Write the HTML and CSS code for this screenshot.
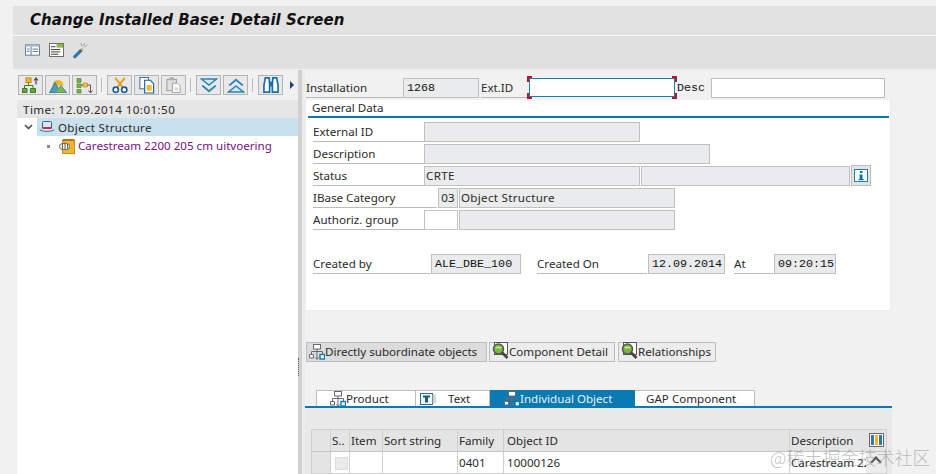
FILE: index.html
```html
<!DOCTYPE html>
<html lang="en">
<head>
<meta charset="utf-8">
<title>Change Installed Base: Detail Screen</title>
<link rel="stylesheet" href="styles.css">
</head>
<body>
<svg class="defs" width="0" height="0" aria-hidden="true">
  <defs>
    <symbol id="hier" viewBox="0 0 16 16">
      <rect x="4.500" y=".5" width="7" height="4.500" fill="#fff" stroke="#667"/>
      <path d="M8 5v2.500M2.500 10V7.500h11V10M8 7.500V11" fill="none" stroke="#667"/>
      <path d="M.5 10.500h4v3.500h-4z" fill="#fff" stroke="#667"/>
      <path d="M8 11v4M6.500 13.500 8 15.500l1.500-2" fill="none" stroke="#667"/>
      <rect x="11" y="10.500" width="4.500" height="4.500" fill="#fff" stroke="#0a7ab5" stroke-width="1.400"/>
    </symbol>
    <symbol id="zoomleaf" viewBox="0 0 18 18">
      <rect x="3.500" y=".5" width="13" height="12" fill="#fff" stroke="#556"/>
      <circle cx="7.500" cy="7" r="5" fill="#79b83a" stroke="#555" stroke-width="1.500"/>
      <path d="M4.500 5.500h6" stroke="#cfe6a8" stroke-width="1.500"/>
      <path d="M11 10.500l5.500 5.500" stroke="#444" stroke-width="2.600"/>
    </symbol>
  </defs>
</svg>

<header class="title-bar"><h1>Change Installed Base: Detail Screen</h1></header>

<div class="app-toolbar">
  <svg class="tb-ico" viewBox="0 0 16 12"><rect x=".5" y=".5" width="15" height="11" fill="#fff" stroke="#56799a"/><path d="M.5.5h15v2H.5z" fill="#a9bfd1"/><path d="M6.500 2.500v9M2 5h3M2 7.500h3M8 5h6M8 7.500h6" stroke="#56799a"/></svg>
  <svg class="tb-ico tb-doc" viewBox="0 0 16 15"><rect x=".5" y=".5" width="15" height="14" fill="#fff" stroke="#666"/><rect x="8" y="1" width="7" height="4" fill="#8dbb4c"/><path d="M2 4h5M2 7h10M2 9.500h10M2 12h8" stroke="#333"/></svg>
  <svg class="tb-ico wand" viewBox="0 0 16 17"><path d="M.5 14.500 8 7l2 2-7.500 7.500q-2 .5-2-2z" fill="#2a78ad" stroke="#1d5c88" stroke-width=".6"/><path d="M8 7l1.500-1.500 2 2L10 9z" fill="#e9b04a"/><path d="M8 .5l2 3.500M12.500 .5 11.500 4M15.500 2.500l-3 2.500" stroke="#8a8a8a" stroke-width=".8"/></svg>
</div>

<main class="workspace">
  <aside class="tree-panel">
    <div class="tree-toolbar">
      <button class="tool" aria-label="Hierarchy up">
        <svg viewBox="0 0 18 16"><rect x="4" y=".5" width="5" height="4.500" fill="#f5b818" stroke="#c68a10"/><path d="M6.500 5V8M2.500 11V8h8.500v3" fill="none" stroke="#3f7a28"/><path d="M.5 11h4.500v4H.5zM8.500 11H13.500v4H8.500z" fill="#62a83c" stroke="#3f7a28"/><path d="M14 7V1M12 3l2-2.500L16 3" fill="none" stroke="#445" stroke-width="1.200"/></svg>
      </button>
      <button class="tool" aria-label="Landscape">
        <svg viewBox="0 0 18 16"><path d="M3.500 8a5.500 5.500 0 0 1 11 0z" fill="#f4b41e"/><path d="M.5 15 6 5l3.500 6L12 8l5.500 7z" fill="#4b9bb5" stroke="#2b7390" stroke-width=".8"/><path d="M7 15l5-7 4.500 7z" fill="#80b54a"/></svg>
      </button>
      <button class="tool" aria-label="Structure">
        <svg viewBox="0 0 18 16"><path d="M1 1h4v4H1zM1 6.500h4v3.500H1zM1 12h4v3.500H1z" fill="#7bb043" stroke="#4d8a2f" stroke-width=".7"/><path d="M7 5.500h4.500v4H7z" fill="#f0c040" stroke="#b78e16" stroke-width=".7"/><path d="M5 7.500h2M11.500 7.500H14.500V15M12.500 13l2 2.500 2-2.500" fill="none" stroke="#556" stroke-width="1"/></svg>
      </button>
      <span class="sep"></span>
      <button class="tool" aria-label="Cut">
        <svg viewBox="0 0 18 18"><path d="M4 1l8 10M14 1 6 11" stroke="#e6a01e" stroke-width="2.200"/><circle cx="4.500" cy="13.500" r="2.800" fill="#fff" stroke="#1f5f96" stroke-width="1.700"/><circle cx="13.500" cy="13.500" r="2.800" fill="#fff" stroke="#1f5f96" stroke-width="1.700"/></svg>
      </button>
      <button class="tool" aria-label="Copy">
        <svg viewBox="0 0 18 18"><rect x="1.500" y=".5" width="9" height="12" fill="#fff" stroke="#33689c"/><path d="M6.500 3.500h6l3.500 3.500v10H6.500z" fill="#fff" stroke="#1f5f96" stroke-width="1.200"/><path d="M8.500 8.500h5.500v6H8.500z" fill="#f0bc36"/></svg>
      </button>
      <button class="tool" aria-label="Paste">
        <svg viewBox="0 0 18 18"><rect x="1.500" y="2.500" width="10" height="12" fill="#e0e0e0" stroke="#999"/><rect x="4" y=".5" width="5" height="3" fill="#aaa"/><path d="M7.500 6.500h5l3 3v7h-8z" fill="#fff" stroke="#8ba4ba"/><path d="M9.500 11h4v3.500h-4z" fill="#e9d8a6"/></svg>
      </button>
      <span class="sep"></span>
      <button class="tool" aria-label="Expand">
        <svg viewBox="0 0 18 16"><path d="M1.500 1.500h15L9 7.500z" fill="#d5e9f4" stroke="#2a82b8" stroke-width="1.500"/><path d="M3 7.500 9 12.500l6-5 1.500 1L9 15 1.500 8.500z" fill="#2a82b8"/></svg>
      </button>
      <button class="tool" aria-label="Collapse">
        <svg viewBox="0 0 18 16"><path d="M3 8.500 9 3.500l6 5 1.500-1L9 1 1.500 7.500z" fill="#2a82b8"/><path d="M1.500 14.500h15L9 8.500z" fill="#d5e9f4" stroke="#2a82b8" stroke-width="1.500"/></svg>
      </button>
      <span class="sep"></span>
      <button class="tool" aria-label="Find">
        <svg viewBox="0 0 18 18"><path d="M1.500 9 3 1h4l.5 6v9h-6zM16.500 9 15 1h-4l-.5 6v9h6z" fill="#fff" stroke="#1d6ea6" stroke-width="1.800"/><path d="M7.500 5h3v5h-3z" fill="#1d6ea6"/></svg>
      </button>
      <span class="more"></span>
    </div>
    <div class="time-row">Time: 12.09.2014 10:01:50</div>
    <ul class="tree">
      <li class="node root">
        <svg class="chev" viewBox="0 0 9 6"><path d="M1 1l3.500 3.500L8 1" fill="none" stroke="#555" stroke-width="1.700"/></svg>
        <div class="node-sel">
          <svg class="hat" viewBox="0 0 16 12"><path d="M3.500 7V1.500q0-1 1-1h7q1 0 1 1V7z" fill="#d7e6f2" stroke="#33689c"/><path d="M3.500 6h9v2h-9z" fill="#c6313a"/><path d="M.8 8.500c2 2.500 12.500 2.500 14.400 0" fill="#d7e6f2" stroke="#33689c"/></svg>
          <span class="wide root-text">Object Structure</span>
        </div>
      </li>
      <li class="node child">
        <span class="bullet"></span>
        <svg class="obj" viewBox="0 0 16 15"><rect x="3.500" y="1.500" width="12" height="13" fill="#f0b52e" stroke="#c98a1c"/><path d="M3.500 1h12" stroke="#b4701e" stroke-width="2"/><rect x=".5" y="4.500" width="10" height="6" rx="3" fill="#f5f1e4" stroke="#666"/><path d="M3.500 5v5M6 5v5M8.500 5v5" stroke="#666"/></svg>
        <span class="purple">Carestream 2200 205 cm uitvoering</span>
      </li>
    </ul>
  </aside>

  <div class="splitter"><span class="grip"></span></div>

  <section class="detail">
    <div class="head-row">
      <span class="lbl head-inst">Installation</span>
      <span class="field mono f-inst">1268</span>
      <span class="lbl head-ext">Ext.ID</span>
      <span class="focus-wrap"><input class="focus-input" type="text" aria-label="Ext.ID"></span>
      <span class="desc-lbl">Desc</span>
      <input class="plain-input" type="text" aria-label="Desc">
    </div>

    <div class="card">
      <div class="card-title">General Data</div>
      <div class="form">
        <div class="row"><span class="flabel w111">External ID</span><span class="field f216"></span></div>
        <div class="row"><span class="flabel w111">Description</span><span class="field f286"></span></div>
        <div class="row"><span class="flabel w111">Status</span><span class="field f216 wide">CRTE</span><span class="field f209"></span>
          <button class="info" aria-label="Information"><svg viewBox="0 0 14 13"><rect x=".5" y=".5" width="13" height="12" fill="#fff" stroke="#1581b8"/><path d="M5.500 5.500h3v4.500h1.200v1.300H4.500V10h1.200V6.800h-.2zM6 2h2.500v2H6z" fill="#0d6f9e"/></svg></button>
        </div>
        <div class="row"><span class="flabel w124">IBase Category</span><span class="field f20 center">03</span><span class="field f216 wide">Object Structure</span></div>
        <div class="row"><span class="flabel w111">Authoriz. group</span><span class="field blank f34"></span><span class="field f216"></span></div>
        <div class="row spaced">
          <span class="flabel w117">Created by</span><span class="field mono f90">ALE_DBE_100</span>
          <span class="flabel w110 gap-l15">Created On</span><span class="field mono f77">12.09.2014</span>
          <span class="flabel w39 gap-l10">At</span><span class="field mono f62">09:20:15</span>
        </div>
      </div>
    </div>

    <div class="btn-row">
      <button class="tbtn active"><svg class="ico16" aria-hidden="true"><use href="#hier"/></svg>Directly subordinate objects</button>
      <button class="tbtn w-comp"><svg class="ico18" aria-hidden="true"><use href="#zoomleaf"/></svg>Component Detail</button>
      <button class="tbtn w-rel"><svg class="ico18" aria-hidden="true"><use href="#zoomleaf"/></svg>Relationships</button>
    </div>

    <nav class="tabs">
      <span class="tab t-prod"><svg class="ico16" aria-hidden="true"><use href="#hier"/></svg>Product</span>
      <span class="tab t-text"><svg class="text-ico" viewBox="0 0 18 12" aria-hidden="true"><rect x=".5" y=".5" width="12" height="11" fill="#eef4f8" stroke="#2f6f96"/><path d="M3 2.500h7v2H8V9.500H5V4.500H3z" fill="#1d5c88"/><path d="M13 1.500v9M15 1.500v9" stroke="#aaa"/></svg>Text</span>
      <span class="tab t-ind sel"><svg class="ico16" aria-hidden="true"><use href="#hier"/></svg>Individual Object</span>
      <span class="tab t-gap">GAP Component</span>
    </nav>

    <div class="table-pane">
      <table class="grid">
        <colgroup><col class="c0"><col class="c1"><col class="c2"><col class="c3"><col class="c4"><col class="c5"><col class="c6"></colgroup>
        <thead><tr><th></th><th>S..</th><th>Item</th><th>Sort string</th><th>Family</th><th class="pad3">Object ID</th><th class="th-desc">Description<svg class="cols" viewBox="0 0 15 14" aria-hidden="true"><rect x=".5" y=".5" width="14" height="13" fill="#fff" stroke="#667"/><path d="M2 2h3v10H2z" fill="#2a78ad"/><path d="M6 2h3v10H6z" fill="#f0b428"/><path d="M10 2h3v10h-3z" fill="#2a78ad"/></svg></th></tr></thead>
        <tbody><tr><td class="sel-cell"></td><td><span class="check"></span></td><td></td><td></td><td>0401</td><td class="pad3">10000126</td><td class="td-desc">Carestream 22<span class="caret"></span></td></tr></tbody>
      </table>
    </div>
  </section>
</main>
<div class="watermark">@稀土掘金技术社区</div>
</body>
</html>
```

FILE: styles.css
```css
* { box-sizing: border-box; }
html, body { margin: 0; height: 474px; overflow: hidden; }
body {
  position: relative;
  background: #f1f1f1;
  color: #2a2a2a;
  font: 11.600px/18px "Noto Sans", "Open Sans", sans-serif;
  padding-top: 6px;
}
.defs { position: absolute; }
button { font: inherit; color: inherit; padding: 0; }
ul { list-style: none; margin: 0; padding: 0; }
.wide { letter-spacing: .3px; }

.title-bar {
  height: 30px;
  margin-left: 13px;
  padding: 3px 0 0 17px;
  background: #e2e2e2;
  border-bottom: 1px solid #f8f8f8;
}
.title-bar h1 {
  margin: 0;
  font: italic bold 15px/22px "DejaVu Sans", sans-serif;
  letter-spacing: .04px;
  color: #111;
}
.app-toolbar {
  height: 33px;
  margin-left: 13px;
  padding: 7px 0 0 12px;
  background: #e0e0e0;
  display: flex;
  align-items: flex-start;
  gap: 9px;
}
.tb-ico { width: 15px; height: 12px; margin-top: 1px; flex: none; }
.tb-doc { height: 14px; margin-top: 0; }
.wand { width: 15px; height: 17px; margin-top: -1px; }

.workspace { display: flex; height: 405px; margin-top: 1px; }

.tree-panel { width: 281px; margin-left: 17px; background: #fff; display: flex; flex-direction: column; }
.tree-toolbar {
  height: 30px;
  background: #f1f1f1;
  padding: 5px 0 0 1px;
  display: flex;
  align-items: flex-start;
  gap: 2px;
}
.tool {
  width: 25px; height: 20px;
  background: #e8e8e8;
  border: 1px solid #b4b4b4;
  display: flex; align-items: center; justify-content: center;
}
.tool svg { width: 18px; height: 17px; flex: none; }
.sep { width: 1px; height: 14px; margin: 3px 3px 0 2px; background: #bbb; }
.more {
  width: 0; height: 0; margin: 6px 0 0 5px;
  border-left: 4px solid #123e8a;
  border-top: 4px solid transparent;
  border-bottom: 4px solid transparent;
}
.time-row { height: 18px; padding-left: 6px; background: #e6e6e6; white-space: nowrap; letter-spacing: .44px; line-height: 20px; }
.tree { flex: 1; }
.node { display: flex; align-items: center; height: 18px; }
.root { height: 18px; }
.root-text { line-height: 20px; padding-top: 1px; }
.chev { width: 9px; height: 6px; margin: 0 4px 0 7px; flex: none; }
.node-sel { flex: 1; height: 18px; background: #c9e1ec; display: flex; align-items: center; padding-left: 2px; }
.hat { width: 16px; height: 12px; margin-right: 3px; flex: none; }
.child { padding-left: 30px; margin-top: 1px; line-height: 20px; }
.bullet { width: 3px; height: 3px; background: #888; margin-right: 9px; flex: none; }
.obj { width: 16px; height: 15px; margin-right: 3px; flex: none; }
.purple { color: #7a0f7f; white-space: nowrap; }

.splitter { width: 7px; background: #d0d0d0; position: relative; border-right: 3px solid #ececec; }
.grip { position: absolute; left: 0; top: 288px; width: 1px; height: 18px; border-left: 1px dotted #555; }

.detail { flex: 1; min-width: 0; }

.lbl { white-space: nowrap; }
.head-row { height: 30px; padding: 8px 0 0 1px; display: flex; align-items: flex-start; }
.head-inst { width: 97px; height: 20px; border-bottom: 1px solid #bbb; line-height: 19px; }
.f-inst { width: 76px; height: 20px; }
.head-ext { width: 46px; margin-left: 2px; line-height: 19px; height: 20px; border-bottom: 1px solid #bbb; }
.focus-wrap {
  width: 150px; height: 23px; margin-top: -2px;
  padding: 2px;
  background:
    linear-gradient(#b81628, #b81628) 0 0/5px 2px no-repeat,
    linear-gradient(#b81628, #b81628) 0 0/2px 6px no-repeat,
    linear-gradient(#b81628, #b81628) 100% 0/5px 2px no-repeat,
    linear-gradient(#b81628, #b81628) 100% 0/2px 6px no-repeat,
    linear-gradient(#b81628, #b81628) 0 100%/5px 2px no-repeat,
    linear-gradient(#b81628, #b81628) 0 100%/2px 6px no-repeat,
    linear-gradient(#b81628, #b81628) 100% 100%/5px 2px no-repeat,
    linear-gradient(#b81628, #b81628) 100% 100%/2px 6px no-repeat;
}
.focus-input { display: block; width: 100%; height: 19px; border: 1px solid #1581a8; background: #fff; outline: 0; padding: 0; }
.desc-lbl { width: 34px; font: 11.700px/20px "Liberation Mono", monospace; color: #111; }
.plain-input { width: 174px; height: 20px; border: 1px solid #bdbdbd; background: #fff; padding: 0; }

.field {
  display: block;
  height: 20px;
  padding: 0 1px;
  background: #e9ebec;
  border: 1px solid #c0c0c0;
  line-height: 17px;
  white-space: nowrap;
  overflow: hidden;
  flex: none;
}
.mono { font: 11.700px/19px "Liberation Mono", monospace; color: #111; }
.field.mono { padding-left: 3px; }
.f216 { width: 216px; }
.f286 { width: 286px; }
.f209 { width: 209px; }
.f20 { width: 20px; }
.f34 { width: 34px; }
.f90 { width: 90px; }
.f77 { width: 77px; }
.f62 { width: 62px; }
.center { padding: 0; text-align: center; }
.blank { background: #fff; }

.card {
  height: 211px;
  margin-right: 45px;
  background: #fff;
  border: 1px solid #ececec;
  border-top: 0;
  padding: 0 1px 0 2px;
}
.card-title { height: 18px; padding-left: 4px; border-bottom: 2px solid #0a7ab0; line-height: 16px; }
.form { padding: 4px 0 0 5px; }
.row { display: flex; height: 22px; align-items: flex-start; gap: 1px; }
.flabel { display: block; height: 20px; border-bottom: 1px solid #bbb; line-height: 19px; white-space: nowrap; flex: none; }
.w111 { width: 111px; margin-right: -1px; }
.w124 { width: 124px; }
.w117 { width: 117px; }
.w110 { width: 110px; }
.w39 { width: 39px; }
.spaced { margin-top: 22px; }
.gap-l15 { margin-left: 15px; }
.gap-l10 { margin-left: 8px; }
.info {
  width: 20px; height: 21px; margin-top: -1px;
  background: #e4e4e4; border: 1px solid #bdbdbd;
  display: flex; align-items: center; justify-content: center;
}
.info svg { width: 14px; height: 13px; }

.btn-row { display: flex; gap: 2px; padding: 31px 0 0 1px; height: 70px; }
.tbtn {
  height: 20px;
  display: flex; align-items: center;
  background: #ececec;
  border: 1px solid #bdbdbd;
  padding: 0 0 0 1px;
  white-space: nowrap;
}
.tbtn.active { width: 181px; background: #dcdcdc; padding-left: 2px; }
.w-comp { width: 126px; }
.w-rel { width: 98px; margin-left: 1px; }
.ico16 { width: 16px; height: 16px; flex: none; }
.ico18 { width: 18px; height: 18px; flex: none; margin-top: -2px; }

.tabs { display: flex; height: 25px; padding: 9px 0 0 11px; margin-right: 44px; position: relative; }
.tabs::after { content: ""; position: absolute; left: 0; right: 0; bottom: -2px; height: 2px; background: #0a7ab0; }
.tab {
  height: 16px;
  display: flex; align-items: center;
  background: #fff;
  border: 1px solid #bdbdbd;
  border-bottom: 0;
  white-space: nowrap;
  line-height: 15px;
}
.t-prod { width: 100px; padding-left: 13px; }
.t-text { width: 74px; padding-left: 4px; border-left: 0; }
.t-ind { width: 145px; padding-left: 13px; }
.t-gap { width: 120px; padding-left: 11px; border-left: 0; }
.sel { background: #0a7ab0; border-color: #0a7ab0; color: #e8f2f8; }
.text-ico { width: 18px; height: 12px; margin-right: 10px; flex: none; }

.table-pane { height: 66px; margin: 2px 44px 0 0; background: #e9e9e9; padding: 21px 0 0 6px; }
.grid { width: 575px; border-collapse: collapse; table-layout: fixed; }
.c0 { width: 19px; } .c1 { width: 19px; } .c2 { width: 33px; } .c3 { width: 75px; }
.c4 { width: 46px; } .c5 { width: 286px; } .c6 { width: 97px; }
.grid th, .grid td {
  padding: 1px 1px 0;
  font-weight: 400;
  text-align: left;
  white-space: nowrap;
  overflow: hidden;
  border: 1px solid #d0d0d0;
}
.grid .pad3 { padding-left: 3px; }
.grid th { height: 22px; background: #e4e4e4; border-bottom: 1px solid #c4c4c4; }
.grid thead th:first-child { border-right: 0; }
.grid td { height: 22px; background: #fff; }
.grid td.sel-cell { background: #e4e4e4; }
.check { display: block; width: 13px; height: 13px; margin-left: 3px; background: #eaeaea; border: 1px solid #dcdcdc; }
.th-desc, .td-desc { position: relative; }
.cols { position: absolute; right: 2px; top: 3px; width: 15px; height: 14px; }
.caret {
  position: absolute; right: 0; top: 0; width: 20px; height: 21px; background: #ececec;
}
.caret::after {
  content: ""; position: absolute; left: 6px; top: 6px; width: 6px; height: 6px;
  border-left: 2px solid #555; border-top: 2px solid #555; transform: rotate(45deg);
}
.watermark {
  position: absolute; left: 770px; top: 447px;
  font: 18px/20px "Noto Sans CJK SC", sans-serif;
  font-weight: 300;
  color: rgba(130,130,130,.5);
  white-space: nowrap;
}
```
